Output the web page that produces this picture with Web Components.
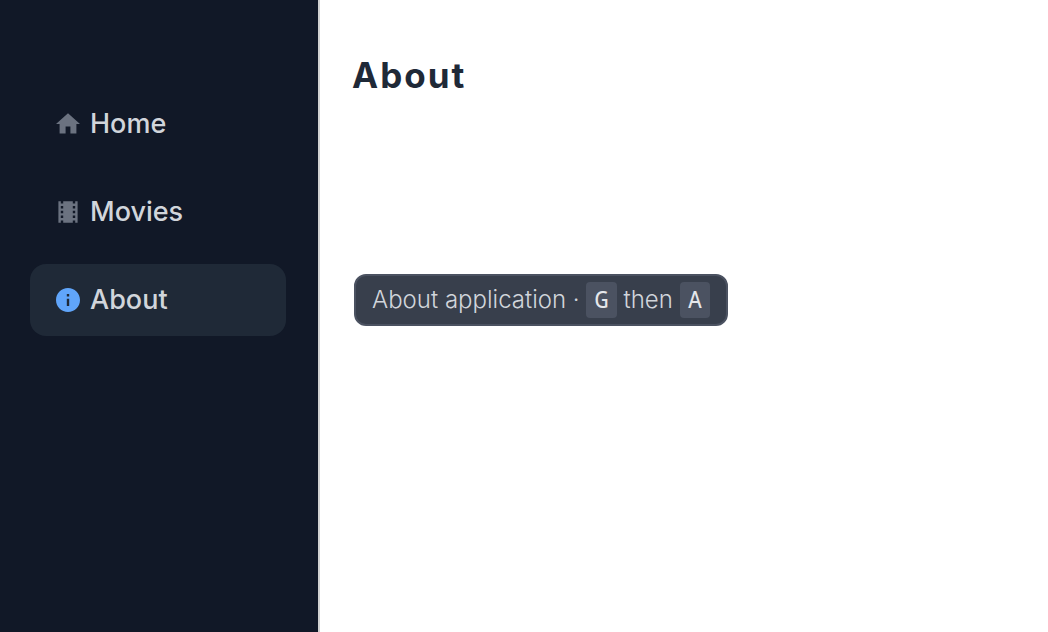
<!DOCTYPE html>
<html lang="en">
<head>
<meta charset="utf-8">
<meta name="viewport" content="width=device-width, initial-scale=1">
<title>About</title>
<style>
  html, body { margin: 0; height: 100%; }
  body { font-family: Inter, "Liberation Sans", sans-serif; background: #fff; color: #1f2937; }
</style>
</head>
<body>
<app-shell>
  <side-nav slot="nav">
    <nav-item href="#home" icon="home">Home</nav-item>
    <nav-item href="#movies" icon="movies">Movies</nav-item>
    <nav-item href="#about" icon="about" active>About
      <key-hint slot="hint">About application · <key-cap>G</key-cap> then <key-cap>A</key-cap></key-hint>
    </nav-item>
  </side-nav>
  <page-title>About</page-title>
</app-shell>
<script>
  const define = (name, markup, setup) => {
    const template = document.createElement('template');
    template.innerHTML = markup;
    customElements.define(name, class extends HTMLElement {
      constructor() {
        super();
        this.attachShadow({ mode: 'open' }).append(template.content.cloneNode(true));
      }
      connectedCallback() { if (setup) setup(this, this.shadowRoot); }
    });
  };

  const icons = {
    home: '<path d="M10 20v-6h4v6h5v-8h3L12 3 2 12h3v8z"/>',
    movies: '<path d="M18 3v2h-2V3H8v2H6V3H4v18h2v-2h2v2h8v-2h2v2h2V3h-2zM8 17H6v-2h2v2zm0-4H6v-2h2v2zm0-4H6V7h2v2zm10 8h-2v-2h2v2zm0-4h-2v-2h2v2zm0-4h-2V7h2v2z"/>',
    about: '<path d="M12 2C6.48 2 2 6.48 2 12s4.48 10 10 10 10-4.48 10-10S17.52 2 12 2zm1 15h-2v-6h2v6zm0-8h-2V7h2v2z"/>'
  };

  define('app-shell', `
    <style>
      :host { display: grid; grid-template-columns: 320px 1fr; min-height: 100vh; }
      main { padding: 48px 32px; }
    </style>
    <slot name="nav"></slot>
    <main><slot></slot></main>`);

  define('side-nav', `
    <style>
      :host { display: block; background: #111827; border-right: 2px solid #d1d1d1; }
      nav { display: flex; flex-direction: column; gap: 16px; padding: 88px 32px 32px 30px; }
    </style>
    <nav aria-label="Main"><slot></slot></nav>`);

  define('nav-item', `
    <style>
      :host { display: block; position: relative; }
      a {
        display: flex; align-items: center; gap: 10px; height: 72px; padding: 0 26px;
        border-radius: 16px; color: #d1d5db; text-decoration: none;
        font-size: 27px; line-height: 40px; font-weight: 500;
      }
      svg { width: 24px; height: 24px; fill: #6b7280; flex: none; }
      :host([active]) a { background: #1f2937; }
      :host([active]) svg { fill: #60a5fa; }
      /* The hint floats over the page, beside its menu entry. */
      slot[name="hint"]::slotted(*) { position: absolute; left: calc(100% + 68px); top: 10px; z-index: 1; }
    </style>
    <a><svg viewBox="2 2 20 20" aria-hidden="true"></svg><span><slot></slot></span></a>
    <slot name="hint"></slot>`,
    (host, root) => {
      root.querySelector('a').href = host.getAttribute('href');
      root.querySelector('svg').innerHTML = icons[host.getAttribute('icon')];
      if (host.hasAttribute('active')) root.querySelector('a').setAttribute('aria-current', 'page');
    });

  define('key-hint', `
    <style>
      :host {
        display: block; box-sizing: border-box; padding: 6px 16px; border: 2px solid #4b5261;
        border-radius: 12px; background: #383f4c; color: #d1d5db; white-space: nowrap;
        font-size: 24px; line-height: 36px; font-weight: 300;
      }
    </style>
    <div role="tooltip"><slot></slot></div>`);

  define('key-cap', `
    <style>
      :host { display: inline-block; vertical-align: top; }
      kbd {
        display: block; padding: 0 8px 2px; border-radius: 4px; background: #4b5261; color: #e5e7eb;
        font: 400 24px/34px "Noto Sans Mono", "DejaVu Sans Mono", monospace;
      }
    </style>
    <kbd><slot></slot></kbd>`);

  define('page-title', `
    <style>
      :host { display: block; }
      h1 { margin: 0; font-size: 35px; line-height: 54px; font-weight: 700; letter-spacing: 2px; color: #1f2937; }
    </style>
    <h1><slot></slot></h1>`);
</script>
</body>
</html>
